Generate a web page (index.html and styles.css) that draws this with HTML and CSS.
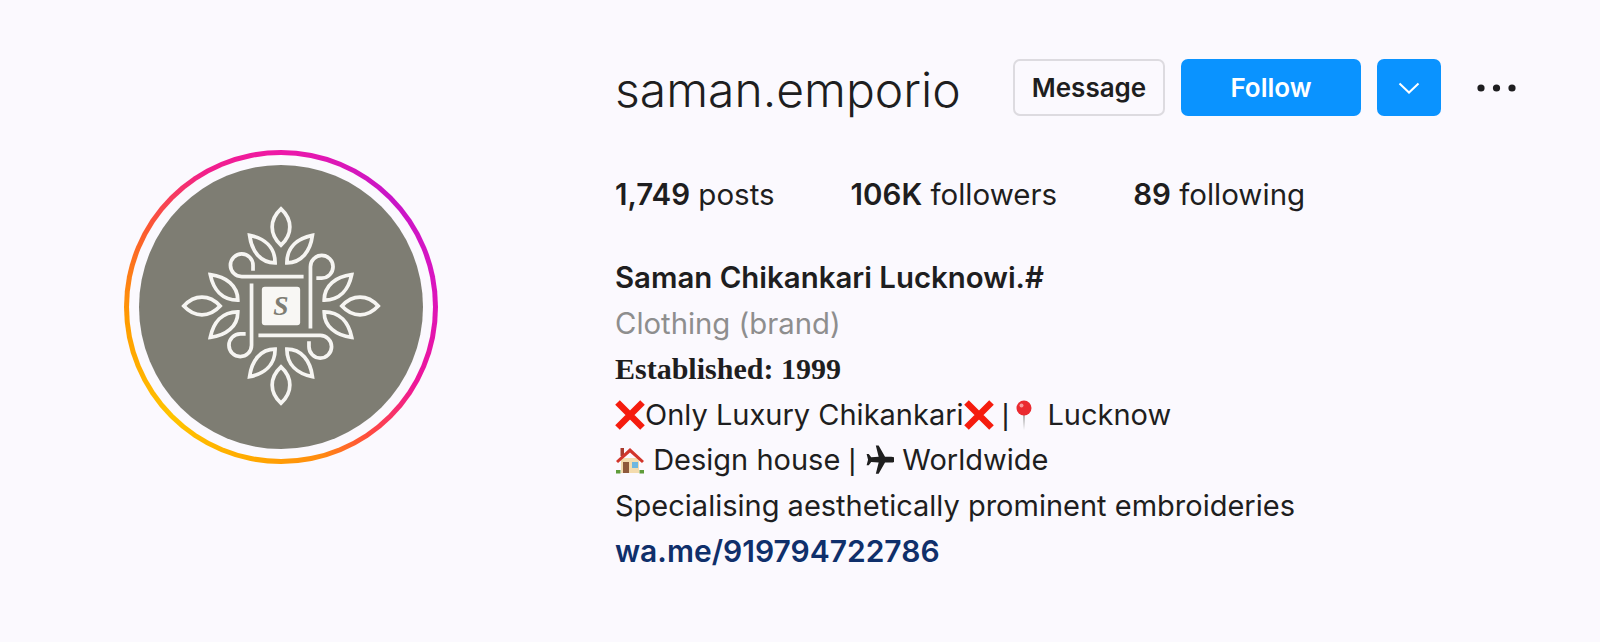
FILE: index.html
```html
<!DOCTYPE html>
<html>
<head>
  <meta charset="utf-8">
  <title>saman.emporio</title>
  <link rel="stylesheet" href="styles.css">
</head>
<body>

<div class="profile">
  <div class="avatar-col">
    <div class="ring">
      <div class="ring-gap">
        <div class="disc">
          <svg class="logo" viewBox="-110 -110 220 220">
            <defs>
              <g id="leaf-pair">
                <path d="M0 -99C12 -88 12 -73 0 -62C-12 -73 -12 -88 0 -99Z"/>
                <path d="M32 -72C17 -69 6 -60 6 -44C21 -44 30 -56 32 -72Z"/>
                <path d="M-32 -72C-17 -69 -6 -60 -6 -44C-21 -44 -30 -56 -32 -72Z"/>
              </g>
              <path id="curl" d="M23 -30H-40A11.5 11.5 0 1 1 -28.5 -41.5V-36"/>
            </defs>
            <g class="logo-lines">
              <use href="#leaf-pair"/>
              <use href="#leaf-pair" transform="rotate(90)"/>
              <use href="#leaf-pair" transform="rotate(180)"/>
              <use href="#leaf-pair" transform="rotate(270)"/>
              <use href="#curl"/>
              <use href="#curl" transform="rotate(90)"/>
              <use href="#curl" transform="rotate(180)"/>
              <use href="#curl" transform="rotate(270)"/>
            </g>
            <rect class="logo-box" x="-19.5" y="-19.5" width="39" height="39" rx="3"/>
            <text class="logo-s" x="0" y="9" text-anchor="middle">S</text>
          </svg>
        </div>
      </div>
    </div>
  </div>

  <div class="info">
    <div class="top-row">
      <h1 class="username">saman.emporio</h1>
      <button class="btn btn-message">Message</button>
      <button class="btn btn-follow">Follow</button>
      <button class="btn btn-more">
        <svg width="22" height="12" viewBox="0 0 22 12"><path d="M1.5 1.5L11 10.5L20.5 1.5" fill="none" stroke="#fff" stroke-width="2"/></svg>
      </button>
      <svg class="dots" width="39" height="8" viewBox="0 0 39 8">
        <circle cx="4" cy="4" r="3.6"/><circle cx="19.5" cy="4" r="3.6"/><circle cx="35" cy="4" r="3.6"/>
      </svg>
    </div>

    <div class="stats">
      <span><b>1,749</b> posts</span>
      <span><b>106K</b> followers</span>
      <span><b>89</b> following</span>
    </div>

    <div class="bio">
      <div class="name">Saman Chikankari Lucknowi.#</div>
      <div class="category">Clothing (brand)</div>
      <div class="established">Established: 1999</div>
      <div class="bio-line">
        <svg class="emoji" viewBox="0 0 30 30"><path d="M2.5 2.5L27.5 27.5M27.5 2.5L2.5 27.5" fill="none" stroke="#f51c0e" stroke-width="6.5"/></svg>Only Luxury Chikankari<svg class="emoji" viewBox="0 0 30 30"><path d="M2.5 2.5L27.5 27.5M27.5 2.5L2.5 27.5" fill="none" stroke="#f51c0e" stroke-width="6.5"/></svg> <span class="pipe">|</span><svg class="emoji" viewBox="0 0 30 30"><path d="M14 14L15 30L16 14Z" fill="#a9a9a9"/><circle cx="15" cy="8" r="7.5" fill="#ea2a30"/><circle cx="12.5" cy="5.5" r="2" fill="#f89a9a"/></svg> Lucknow
      </div>
      <div class="bio-line">
        <svg class="emoji" viewBox="0 0 30 30">
          <rect x="6" y="13" width="18" height="15" fill="#f4dcae"/>
          <rect x="5.5" y="3" width="3.5" height="8" fill="#a83a2c"/>
          <path d="M15 3L1 16L3 18L15 7.5L27 18L29 16Z" fill="#d2352b"/>
          <rect x="8" y="17" width="6" height="11" fill="#8f5a3c"/>
          <rect x="17" y="17" width="6" height="6" fill="#6fb7e0"/>
          <path d="M1 28.500h4.500v-3.500H1ZM24.500 28.500h4.500v-3.500h-4.500Z" fill="#5f9c3a"/>
        </svg> Design house <span class="pipe">|</span> <svg class="emoji" viewBox="0 0 30 30"><path transform="rotate(45 15 15)" d="M27 2.500C25.500 1.500 23 2.500 21.500 4L17 8.500L4.500 5L2.500 7L12.500 13L7.500 18.500L3.500 18L2 19.500L7 22.500L10 27.500L11.500 26L11 22L16.500 17L22.500 27L24.500 25L21 12.500L25.500 8C27 6.500 28 4 27 2.500Z" fill="#1f1f1f"/></svg> Worldwide
      </div>
      <div class="bio-line">Specialising aesthetically prominent embroideries</div>
      <a class="site" href="#">wa.me/919794722786</a>
    </div>
  </div>
</div>

</body>
</html>
```

FILE: styles.css
```css
html, body {
  margin: 0;
  padding: 0;
  height: 642px;
  overflow: hidden;
  font-family: Inter, 'Liberation Sans', sans-serif;
  background-color: #fbf9fe;
  color: #1e1e20;
}
.profile {
  display: flex;
  padding: 59px 0 0 124px;
}
.avatar-col {
  width: 491px;
  padding-top: 91px;
}
.ring {
  width: 314px;
  height: 314px;
  box-sizing: border-box;
  padding: 5px;
  border-radius: 50%;
  background: conic-gradient(#ee18a8 0deg, #c815c8 45deg, #d915c0 80deg, #ee1699 120deg, #ff4a40 145deg, #ff8a10 165deg, #ffa800 190deg, #ffc400 225deg, #ff9c00 265deg, #fb5a30 300deg, #f2208a 330deg, #ee18a8 360deg);
}
.ring-gap {
  height: 100%;
  box-sizing: border-box;
  padding: 10px;
  border-radius: 50%;
  background-color: #fbf9fe;
}
.disc {
  height: 100%;
  border-radius: 50%;
  background-color: #7e7d73;
  display: flex;
  align-items: center;
  justify-content: center;
}
.logo {
  width: 216px;
  height: 216px;
  margin-top: -3px;
}
.logo-lines {
  fill: none;
  stroke: #f6f5f2;
  stroke-width: 3.8;
}
.logo-box {
  fill: #f8f7f4;
}
.logo-s {
  font-family: 'Liberation Serif', serif;
  font-style: italic;
  font-weight: 700;
  font-size: 28px;
  fill: #7e7d73;
}
.info {
  flex: 1;
}
.top-row {
  display: flex;
  align-items: center;
  height: 57px;
}
.username {
  margin: 0 54px 0 0;
  padding-top: 3px;
  font-size: 48px;
  font-weight: 300;
  line-height: 57px;
  width: 344px;
  white-space: nowrap;
}
.btn {
  height: 57px;
  box-sizing: border-box;
  border-radius: 7px;
  border: none;
  font-family: inherit;
  font-size: 26px;
  font-weight: 600;
  padding: 0;
}
.btn-message {
  width: 152px;
  background: transparent;
  border: 2px solid #dddbe0;
  color: #1e1e20;
  margin-right: 16px;
}
.btn-follow {
  width: 180px;
  background-color: #0a93ff;
  color: #fff;
  margin-right: 16px;
}
.btn-more {
  width: 64px;
  background-color: #0a93ff;
  display: flex;
  align-items: center;
  justify-content: center;
}
.dots {
  margin-left: 36px;
  fill: #1e1e20;
}
.stats {
  display: flex;
  gap: 76px;
  margin-top: 58px;
  font-size: 29.5px;
  line-height: 40px;
}
.stats b, .name {
  font-weight: 600;
}
.bio {
  margin-top: 41px;
  font-size: 29px;
  line-height: 45.6px;
}
.bio > * {
  height: 45.6px;
}
.name {
  font-size: 29.4px;
}
.category {
  color: #8e8e8e;
  font-size: 29.3px;
}
.established {
  font-family: 'Liberation Serif', serif;
  font-weight: 700;
  font-size: 30px;
}
.emoji {
  width: 30px;
  height: 30px;
  vertical-align: -5px;
}
.pipe {
  font-family: 'Liberation Sans', sans-serif;
  font-size: 29px;
  line-height: 1;
}
.site {
  display: block;
  color: #0f2f6b;
  font-weight: 600;
  font-size: 30px;
  text-decoration: none;
}
```
